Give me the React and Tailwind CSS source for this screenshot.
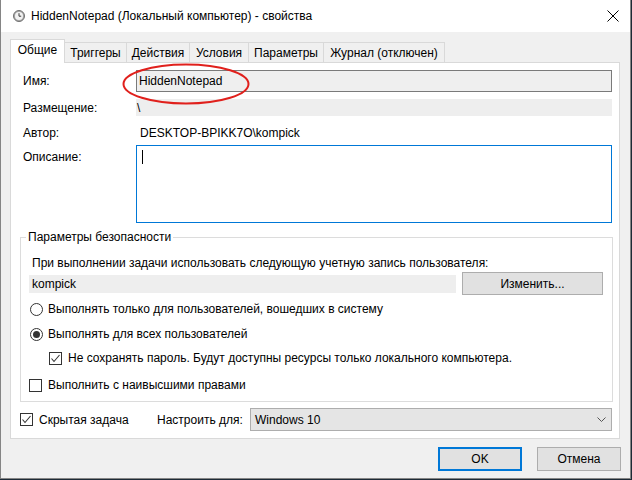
import React from 'react';

const CheckBox = ({ checked }) => (
  <span className="w-[13px] h-[13px] border border-[#333333] bg-white flex items-center justify-center shrink-0">
    {checked && (
      <svg width="11" height="11" viewBox="0 0 11 11">
        <path d="M1.5 5.5 L4 8.5 L9.5 2" fill="none" stroke="#333333" strokeWidth="1.1" />
      </svg>
    )}
  </span>
);

const Radio = ({ checked }) => (
  <span className="w-[13px] h-[13px] rounded-full border border-[#333333] bg-white flex items-center justify-center shrink-0">
    {checked && <span className="w-[7px] h-[7px] rounded-full bg-[#333333]" />}
  </span>
);

const tabs = [
  { label: 'Триггеры', w: 'w-[62px]' },
  { label: 'Действия', w: 'w-[63px]' },
  { label: 'Условия', w: 'w-[59px]' },
  { label: 'Параметры', w: 'w-[75px]' },
  { label: 'Журнал (отключен)', w: 'w-[121px]' },
];

const ClockIcon = () => (
  <svg width="12" height="12" viewBox="0 0 12 12">
    <circle cx="6" cy="6" r="5.5" fill="#a9a9a9" stroke="#707070" strokeWidth="1" />
    <circle cx="6" cy="6" r="4" fill="#f2f2f2" />
    <path d="M6 3.2 V6.2 H8.2" fill="none" stroke="#3a3a3a" strokeWidth="1" />
  </svg>
);

export default function App() {
  return (
    <div className="relative w-[632px] h-[480px] bg-[#1d2a36] font-['Liberation_Sans',Arial,sans-serif] text-[12px] text-black leading-[16px]">
      <div className="w-[631px] h-[479px] bg-[#f0f0f0] border-x border-b border-[#858585] flex flex-col">
        {/* title bar */}
        <div className="h-[32px] bg-white flex items-center pl-[12px] pr-[11px]">
          <ClockIcon />
          <span className="ml-[6px] flex-1">HiddenNotepad (Локальный компьютер) - свойства</span>
          <svg width="12" height="12" viewBox="0 0 12 12">
            <path d="M0.5 0.5 L11.5 11.5 M11.5 0.5 L0.5 11.5" stroke="#000" strokeWidth="1" />
          </svg>
        </div>

        {/* tabs */}
        <div className="mt-[7px] h-[23px] ml-[9px] flex items-end">
          <div className="relative z-10 w-[55px] h-[24px] -mb-px bg-white border-t border-x border-[#d9d9d9] flex items-center justify-center pb-[3px]">
            Общие
          </div>
          {tabs.map((t) => (
            <div
              key={t.label}
              className={`${t.w} h-[20px] border-t border-r border-[#d9d9d9] bg-[#f0f0f0] flex items-center justify-center`}
            >
              {t.label}
            </div>
          ))}
        </div>

        {/* panel */}
        <div className="ml-[9px] w-[610px] h-[377px] bg-white border border-[#d9d9d9] pl-[12px] flex flex-col">
          <div className="mt-[7px] h-[22px] flex items-center">
            <span className="w-[113px]">Имя:</span>
            <div className="w-[476px] h-[22px] border border-[#7a7a7a] bg-[#efefef] pl-[2px] flex items-center">HiddenNotepad</div>
          </div>
          <div className="mt-[7px] h-[17px] flex items-center">
            <span className="w-[113px]">Размещение:</span>
            <div className="w-[476px] h-[17px] bg-[#eeeeee] pl-[1px] flex items-center">\</div>
          </div>
          <div className="mt-[8px] h-[17px] flex items-center">
            <span className="w-[113px]">Автор:</span>
            <span className="pl-[4px]">DESKTOP-BPIKK7O\kompick</span>
          </div>
          <div className="mt-[4px] flex">
            <span className="w-[113px] pt-[4px] leading-[17px]">Описание:</span>
            <div className="w-[476px] h-[78px] border border-[#0078d7] bg-white pl-[5px] pt-[4px]">
              <span className="block w-px h-[14px] bg-black" />
            </div>
          </div>

          <fieldset className="mt-[6px] -ml-[3px] w-[593px] border border-[#dcdcdc] pl-[8px] pr-[9px] pb-[7px]">
            <legend className="-ml-[3px] px-[2px] leading-[16px]">Параметры безопасности</legend>
            <div className="mt-[10px] ml-[3px] leading-[17px]">
              При выполнении задачи использовать следующую учетную запись пользователя:
            </div>
            <div className="h-[23px] flex items-center justify-between">
              <div className="w-[427px] h-[18px] bg-[#eeeeee] pl-[3px] flex items-center">kompick</div>
              <button className="w-[141px] h-[23px] border border-[#adadad] bg-[#e1e1e1]">Изменить...</button>
            </div>
            <div className="mt-[5px] h-[18px] ml-[1px] flex items-center gap-[5px]">
              <Radio />
              <span>Выполнять только для пользователей, вошедших в систему</span>
            </div>
            <div className="mt-[7px] h-[18px] ml-[1px] flex items-center gap-[5px]">
              <Radio checked />
              <span>Выполнять для всех пользователей</span>
            </div>
            <div className="mt-[6px] h-[18px] ml-[20px] flex items-center gap-[6px]">
              <CheckBox checked />
              <span>Не сохранять пароль. Будут доступны ресурсы только локального компьютера.</span>
            </div>
            <div className="mt-[9px] h-[18px] flex items-center gap-[6px]">
              <CheckBox />
              <span>Выполнить с наивысшими правами</span>
            </div>
          </fieldset>

          <div className="mt-[6px] h-[23px] -ml-[3px] flex items-center">
            <div className="w-[137px] flex items-center gap-[6px]">
              <CheckBox checked />
              <span>Скрытая задача</span>
            </div>
            <span className="w-[93px]">Настроить для:</span>
            <div className="w-[362px] h-[23px] border border-[#adadad] bg-[#e5e5e5] pl-[4px] pr-[5px] flex items-center justify-between">
              <span>Windows 10</span>
              <svg width="9" height="6" viewBox="0 0 9 6">
                <path d="M0.5 0.5 L4.5 4.5 L8.5 0.5" fill="none" stroke="#555" strokeWidth="1" />
              </svg>
            </div>
          </div>
        </div>

        {/* buttons */}
        <div className="mt-[8px] mr-[9px] flex justify-end gap-[15px]">
          <button className="w-[84px] h-[24px] border-2 border-[#0078d7] bg-[#e1e1e1]">OK</button>
          <button className="w-[84px] h-[24px] border border-[#adadad] bg-[#e1e1e1]">Отмена</button>
        </div>
      </div>

      {/* hand-drawn highlight */}
      <svg className="absolute left-[121px] top-[62px]" width="132" height="44" viewBox="0 0 132 44">
        <ellipse cx="65" cy="22" rx="62.5" ry="19.5" fill="none" stroke="#e0201c" strokeWidth="2" />
      </svg>
    </div>
  );
}
